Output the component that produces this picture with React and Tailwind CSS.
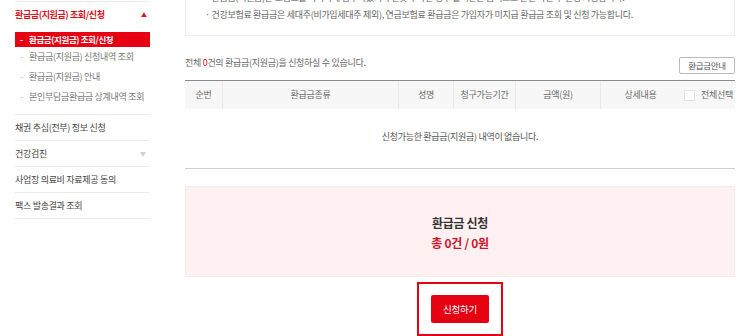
import React from "react";

const font = { fontFamily: '"Noto Sans CJK KR", "Noto Sans", sans-serif' };

function Sidebar() {
  const subs = ["환급금(지원금) 신청내역 조회", "환급금(지원금) 안내", "본인부담금환급금 상계내역 조회"];
  const rows = [
    { t: "채권 추심(전부) 정보 신청" },
    { t: "건강검진", down: true },
    { t: "사업장 의료비 자료제공 동의" },
    { t: "팩스 발송결과 조회" },
  ];
  return (
    <div className="ml-[15px] w-[135px] shrink-0 flex flex-col">
      <div className="mt-[1px] border-t border-[#ececec]" />
      <div className="h-[25px] flex items-center justify-between pr-[3px]">
        <span className="text-[9px] font-bold text-[#e0101c] tracking-[-0.4px]">환급금(지원금) 조회/신청</span>
        <span className="text-[6px] text-[#e0101c] leading-none">▲</span>
      </div>
      <div className="mt-[5px] h-[15px] bg-[#e60012] flex items-center pl-[5px] text-white text-[8.5px] font-bold tracking-[-0.4px]">
        <span className="w-[9px]">-</span>
        <span>환급금(지원금) 조회/신청</span>
      </div>
      {subs.map((s) => (
        <div key={s} className="h-[20px] flex items-center pl-[5px] text-[9px] text-[#777] tracking-[-0.3px]">
          <span className="w-[9px] text-[#bbb]">-</span>
          <span>{s}</span>
        </div>
      ))}
      <div className="h-[8px] border-b border-[#ececec]" />
      {rows.map((r) => (
        <div key={r.t} className="h-[26px] border-b border-[#ececec] flex items-center justify-between pr-[4px]">
          <span className="text-[9px] text-[#444] tracking-[-0.3px]">{r.t}</span>
          {r.down && <span className="text-[6px] text-[#d0d0d0] leading-none">▼</span>}
        </div>
      ))}
    </div>
  );
}

const cols = [
  { w: "w-[37px]", t: "순번" },
  { w: "w-[176px]", t: "환급금종류" },
  { w: "w-[55px]", t: "성명" },
  { w: "w-[62px]", t: "청구가능기간" },
  { w: "w-[85px]", t: "금액(원)" },
  { w: "w-[80px]", t: "상세내용" },
];

function Main() {
  return (
    <div className="ml-[35px] w-[550px] shrink-0 flex flex-col">
      <div className="-mt-[20px] border border-[#ececec] bg-white pt-[8px] pb-[12px] pl-[19px] text-[9px] text-[#666] leading-[17px] tracking-[-0.3px]">
        <div>· 환급금(지원금)은 보험료를 과다하게 납부하였거나 잘못 부과된 경우 돌려받는 금액으로 본인 확인 후 신청 가능합니다.</div>
        <div>· 건강보험료 환급금은 세대주(비가입세대주 제외), 연금보험료 환급금은 가입자가 미지급 환급금 조회 및 신청 가능합니다.</div>
      </div>
      <div className="mt-[21px] h-[17px] flex items-center justify-between">
        <span className="mb-[5px] text-[9px] text-[#666] tracking-[-0.3px]">
          전체 <span className="text-[#e0101c]">0</span>건의 환급금(지원금)을 신청하실 수 있습니다.
        </span>
        <button className="w-[56px] h-[17px] border border-[#bbb] rounded-[2px] bg-white text-[8.5px] text-[#555] flex items-center justify-center tracking-[-0.3px]">
          환급금안내
        </button>
      </div>
      <div className="mt-[6px] border-t border-[#8a8a8a]">
        <div className="h-[28px] bg-[#f7f7f7] flex text-[9px] text-[#6a6a6a] tracking-[-0.3px]">
          {cols.map((c, i) => (
            <div key={c.t} className={`${c.w} flex items-center justify-center ${i > 0 ? "border-l border-[#e9e9e9]" : ""}`}>
              {c.t}
            </div>
          ))}
          <div className="flex-1 flex items-center justify-center gap-[6px] pl-[2px]">
            <span className="w-[11px] h-[11px] bg-white border border-[#e3e3e3] inline-block" />
            <span>전체선택</span>
          </div>
        </div>
        <div className="h-[60px] border-b border-[#cfcfcf] flex items-center justify-center pb-[4px] text-[9px] text-[#555] tracking-[-0.3px]">
          신청가능한 환급금(지원금) 내역이 없습니다.
        </div>
      </div>
      <div className="mt-[17px] h-[93px] bg-[#fff1f1] border border-[#fbe8e8] flex flex-col items-center justify-center pt-[2px]">
        <div className="text-[12px] font-bold text-[#333] leading-[20px] tracking-[-0.3px]">환급금 신청</div>
        <div className="text-[12px] font-bold text-[#d3122a] leading-[20px] tracking-[-0.3px]">총 0건 / 0원</div>
      </div>
      <div className="mt-[5px] self-center border-2 border-[#e60012] px-[12px] pt-[11px] pb-[11px]">
        <button className="w-[58px] h-[28px] bg-[#e50012] rounded-[2px] text-white text-[9.5px] flex items-center justify-center tracking-[-0.3px]">
          신청하기
        </button>
      </div>
    </div>
  );
}

export default function App() {
  return (
    <div className="w-[740px] h-[336px] overflow-hidden bg-white flex" style={font}>
      <Sidebar />
      <Main />
    </div>
  );
}
